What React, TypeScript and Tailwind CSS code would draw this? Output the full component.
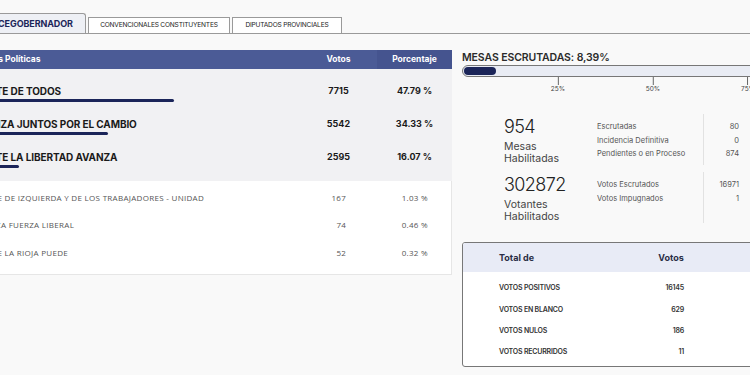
import React from 'react'

const top = [
  { name: 'FRENTE DE TODOS', votos: '7715', pct: '47.79 %', bar: 'w-[234px]' },
  { name: 'ALIANZA JUNTOS POR EL CAMBIO', votos: '5542', pct: '34.33 %', bar: 'w-[168px]' },
  { name: 'FRENTE LA LIBERTAD AVANZA', votos: '2595', pct: '16.07 %', bar: 'w-[79px]' },
]

const rest = [
  { name: 'FRENTE DE IZQUIERDA Y DE LOS TRABAJADORES - UNIDAD', votos: '167', pct: '1.03 %' },
  { name: 'ALIANZA FUERZA LIBERAL', votos: '74', pct: '0.46 %' },
  { name: 'FRENTE LA RIOJA PUEDE', votos: '52', pct: '0.32 %' },
]

const totales = [
  ['VOTOS POSITIVOS', '16145'],
  ['VOTOS EN BLANCO', '629'],
  ['VOTOS NULOS', '186'],
  ['VOTOS RECURRIDOS', '11'],
]

const ticks = [
  { label: '25%', cls: 'left-[96px]' },
  { label: '50%', cls: 'left-[191px]' },
  { label: '75%', cls: 'left-[286px]' },
]

function Stat({ big, l1, l2, rows }: { big: string; l1: string; l2: string; rows: string[][] }) {
  return (
    <div className="flex items-start">
      {/* big number */}
      <div className="w-[135px] pl-[42px]">
        <p className="text-[18px] font-light leading-[26px] text-[#222] tracking-[-0.6px]">{big}</p>
        <p className="text-[10.5px] leading-[12px] text-[#444] mt-[1px]">{l1}</p>
        <p className="text-[10.5px] leading-[12px] text-[#444]">{l2}</p>
      </div>
      {/* details */}
      <div className="w-[107px] self-stretch border-r border-[#e2e2e2] pt-[6px]">
        {rows.map(([k]) => (
          <p key={k} className="text-[7.5px] leading-[13.5px] text-[#555]">{k}</p>
        ))}
      </div>
      <div className="w-[35px] pt-[6px] text-right">
        {rows.map(([k, v]) => (
          <p key={k} className="text-[7.5px] leading-[13.5px] text-[#555]">{v}</p>
        ))}
      </div>
    </div>
  )
}

export default function App() {
  return (
    <div className="w-[750px] h-[375px] overflow-hidden bg-[#f9f9f9] font-['Inter',sans-serif]">
      <div className="-ml-[60px] w-[1200px]">
        {/* Tabs */}
        <div className="flex items-end gap-[2px] pt-[13px] border-b border-[#9a9a9a] pl-[36px]">
          <div className="h-[20px] px-[12px] flex items-center bg-[#eef0f5] border border-b-0 border-[#9a9a9a] rounded-t-[3px] text-[9px] font-bold text-[#1b2559] tracking-[-0.1px]">
            VICEGOBERNADOR
          </div>
          <div className="h-[16px] w-[142px] flex items-center justify-center bg-white border border-b-0 border-[#9a9a9a] text-[6.6px] text-[#222] tracking-[-0.2px]">
            CONVENCIONALES CONSTITUYENTES
          </div>
          <div className="h-[16px] w-[110px] flex items-center justify-center bg-white border border-b-0 border-[#9a9a9a] text-[6.6px] text-[#222] tracking-[-0.2px]">
            DIPUTADOS PROVINCIALES
          </div>
        </div>

        <div className="flex items-start gap-[10px] mt-[16px]">
          {/* Left table */}
          <div className="w-[512px]">
            <div className="flex h-[19px] items-center bg-[#4b5b96] text-white text-[8.5px] font-bold">
              <div className="w-[360px] pl-[30px]">Fuerzas Políticas</div>
              <div className="w-[77px] text-center">Votos</div>
              <div className="w-[75px] h-full flex items-center justify-center bg-[#45548f]">Porcentaje</div>
            </div>

            <div className="bg-[#f1f1f3] pt-[7px] pb-[6px]">
              {top.map((r) => (
                <div key={r.name} className="flex items-start h-[33px] pt-[9px] text-[10px] font-bold text-[#1a1a1a]">
                  <div className="w-[360px]">
                    <p className="pl-[30px] leading-[12px] tracking-[-0.1px]">{r.name}</p>
                    <div className={`${r.bar} h-[3px] mt-[2px] rounded-full bg-[#1b2559]`} />
                  </div>
                  <p className="w-[77px] text-center leading-[12px] text-[9px]">{r.votos}</p>
                  <p className="w-[75px] text-center leading-[12px] text-[9px]">{r.pct}</p>
                </div>
              ))}
            </div>

            <div className="bg-white pt-[3px] pb-[7px] border-b border-r border-[#e6e6e6] font-['Open_Sans',sans-serif]">
              {rest.map((r) => (
                <div key={r.name} className="flex items-center h-[27.5px] text-[8px] text-[#555] tracking-[0.3px]">
                  <p className="w-[360px] pl-[32px]">{r.name}</p>
                  <p className="w-[77px] text-right pr-[30px]">{r.votos}</p>
                  <p className="w-[75px] text-right pr-[23px]">{r.pct}</p>
                </div>
              ))}
            </div>
          </div>

          {/* Right column */}
          <div className="w-[400px] pt-[2px]">
            <p className="text-[10.5px] font-semibold leading-[12px] text-[#2b2b2b] tracking-[-0.1px]">MESAS ESCRUTADAS: 8,39%</p>
            <div className="w-[382px] h-[12px] mt-[1px] rounded-full border border-[#777] bg-[#e9ecf4] p-[1px]">
              <div className="w-[32px] h-full rounded-full bg-[#1b2559]" />
            </div>
            {/* scale */}
            <div className="relative w-[382px] h-[16px]">
              {ticks.map((t) => (
                <div key={t.label} className={`absolute top-0 ${t.cls} flex flex-col items-center -translate-x-1/2`}>
                  <div className="w-px h-[8px] bg-[#666]" />
                  <span className="text-[6.5px] leading-[8px] text-[#444]">{t.label}</span>
                </div>
              ))}
            </div>

            <div className="mt-[21px] flex flex-col gap-[7px]">
              <Stat
                big="954"
                l1="Mesas"
                l2="Habilitadas"
                rows={[
                  ['Escrutadas', '80'],
                  ['Incidencia Definitiva', '0'],
                  ['Pendientes o en Proceso', '874'],
                ]}
              />
              <Stat
                big="302872"
                l1="Votantes"
                l2="Habilitados"
                rows={[
                  ['Votos Escrutados', '16971'],
                  ['Votos Impugnados', '1'],
                ]}
              />
            </div>

            {/* Totales */}
            <div className="mt-[19px] w-[382px] border border-[#777] rounded-[3px] bg-white overflow-hidden">
              <div className="flex items-center h-[29px] bg-[#e8ebf6] text-[9px] font-bold text-[#2a2d45]">
                <p className="w-[178px] pl-[36px]">Total de</p>
                <p className="w-[60px] text-center">Votos</p>
              </div>
              <div className="pt-[6px] pb-[3px]">
                {totales.map(([k, v]) => (
                  <div key={k} className="flex items-center h-[21.3px] text-[7px] font-semibold text-[#333] tracking-[-0.2px]">
                    <p className="w-[178px] pl-[36px]">{k}</p>
                    <p className="w-[43px] text-right">{v}</p>
                  </div>
                ))}
              </div>
            </div>
          </div>
        </div>
      </div>
    </div>
  )
}
